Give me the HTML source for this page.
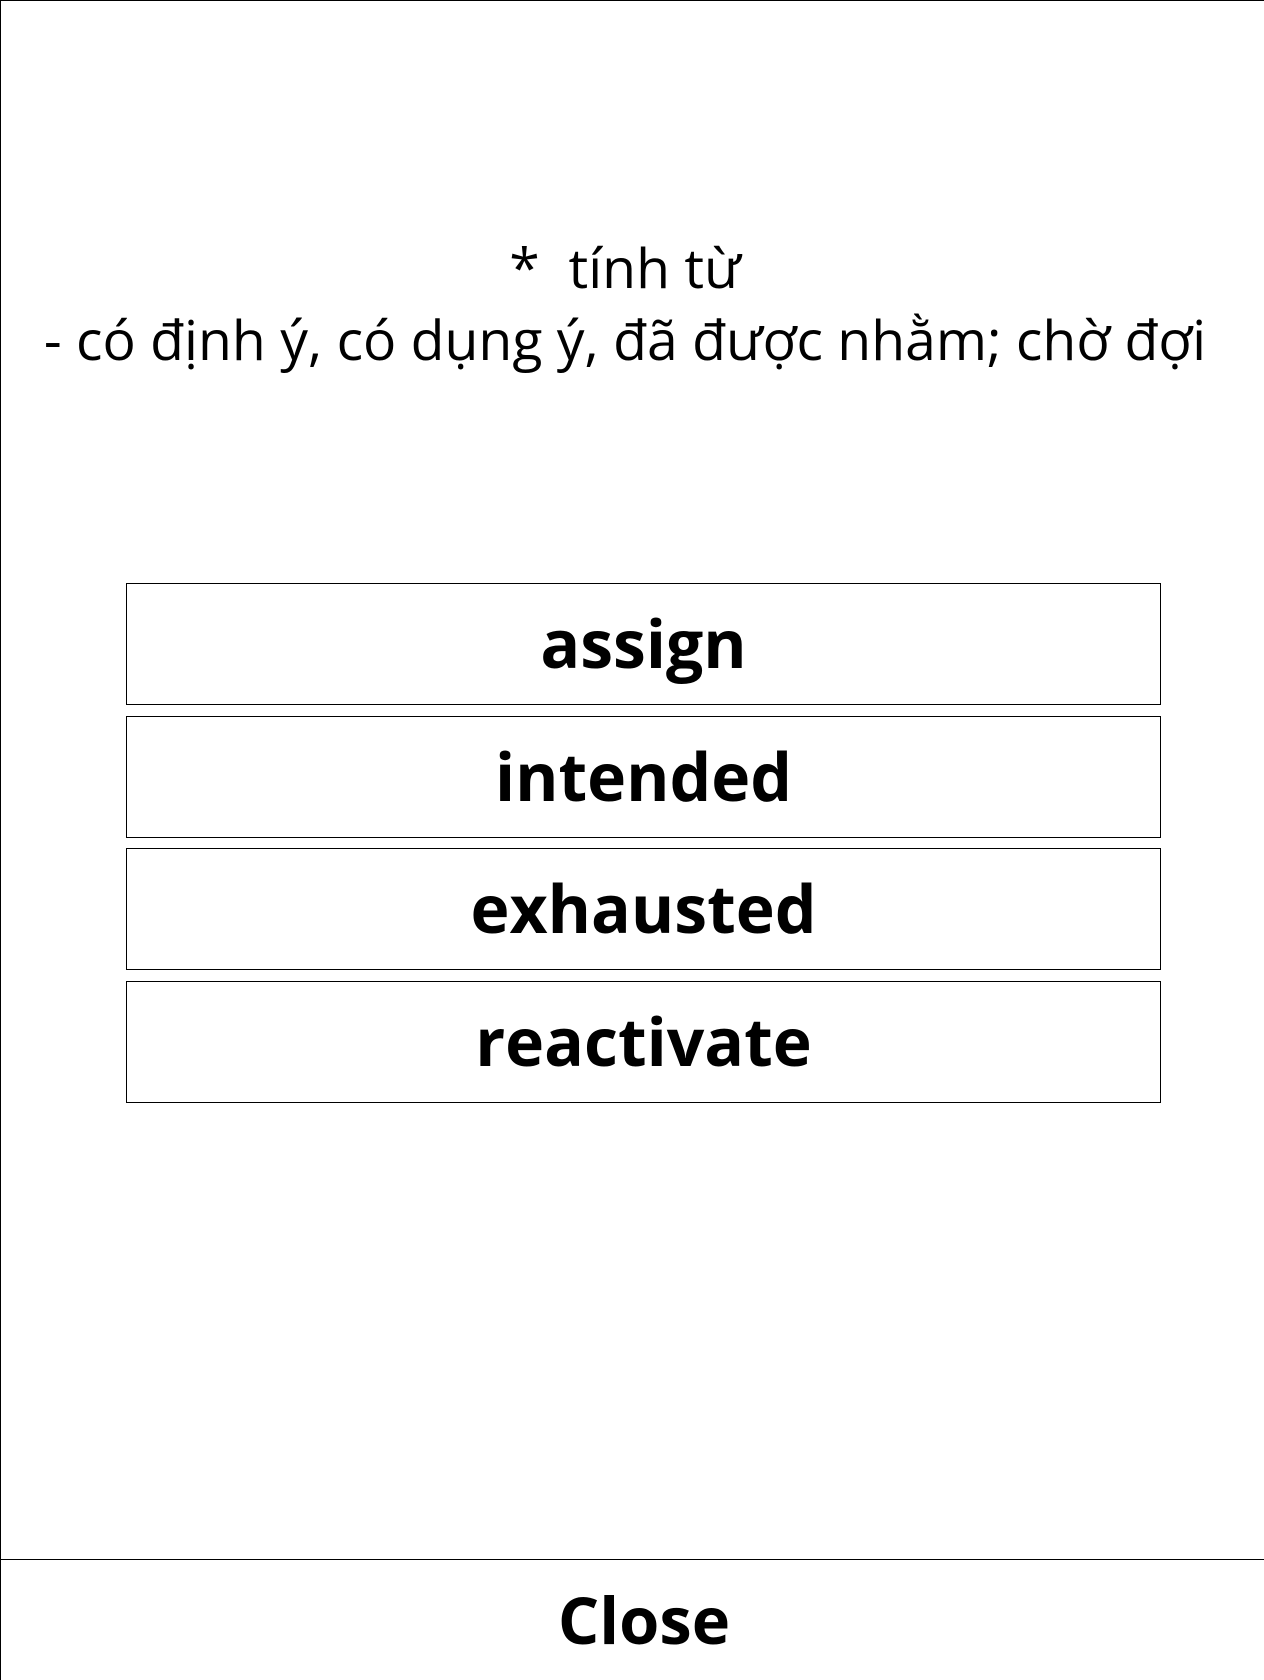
<!DOCTYPE html>
<html><head><meta charset="utf-8"><style>
html,body{margin:0;padding:0;background:#fff;}
body{width:1264px;height:1680px;position:relative;overflow:hidden;font-family:"Open Sans","Noto Sans","Liberation Sans","DejaVu Sans",sans-serif;color:#000;}
.frame{position:absolute;left:0;top:0;width:1264px;height:1680px;border-left:1px solid #000;border-top:1px solid #000;box-sizing:border-box;}
.l{position:absolute;left:-7px;width:1264px;text-align:center;white-space:nowrap;font-size:55.3px;}
.box{position:absolute;left:126px;width:1035px;height:122px;border:1px solid #000;box-sizing:border-box;text-align:center;line-height:118px;font-weight:bold;font-size:66px;}
.sep{position:absolute;left:0;top:1559px;width:1264px;border-top:1px solid #000;}
.close{position:absolute;left:12px;top:1560px;width:1264px;height:120px;text-align:center;line-height:120px;font-weight:bold;font-size:65px;}
</style></head><body>
<div class="frame"></div>
<div class="l" style="top:230px;">*&nbsp; tính từ</div>
<div class="l" style="top:302px;">- có định ý, có dụng ý, đã được nhằm; chờ đợi</div>
<div class="box" style="top:583px;">assign</div>
<div class="box" style="top:716px;">intended</div>
<div class="box" style="top:848px;">exhausted</div>
<div class="box" style="top:981px;">reactivate</div>
<div class="sep"></div>
<div class="close">Close</div>
</body></html>
